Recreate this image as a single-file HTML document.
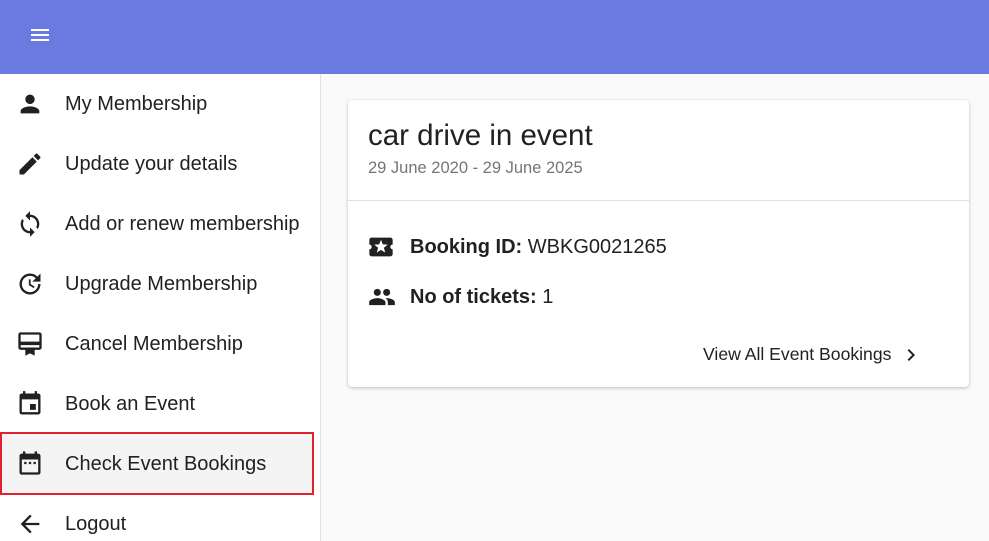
<!DOCTYPE html>
<html><head><style>
*{margin:0;padding:0;box-sizing:border-box}
html,body{width:989px;height:541px;overflow:hidden}
body{background:#fafafa;font-family:"Liberation Sans",Arial,sans-serif;position:relative;color:#212121}
.hdr{position:absolute;left:0;top:0;width:989px;height:74px;background:#6b7ae0}
.side{position:absolute;left:0;top:74px;width:321px;height:467px;background:#fff;border-right:1px solid #e0e0e0}
.item{position:absolute;left:0;width:320px;height:60px}
.item svg{position:absolute;left:16px;top:16px;width:28px;height:28px;fill:#212121}
.item span{position:absolute;left:65px;top:19px;font-size:20px;color:#212121}
.sel{background:#f4f4f4;border:2px solid #e3202f;width:314px}
.card{position:absolute;left:348px;top:100px;width:621px;height:287px;background:#fff;border-radius:4px;box-shadow:0 1px 3px rgba(0,0,0,.25)}
</style></head><body>
<div class="hdr"><svg style="position:absolute;left:28px;top:23px" width="24" height="24" viewBox="0 0 24 24"><path fill="#fff" d="M3 18h18v-2H3v2zm0-5h18v-2H3v2zm0-7v2h18V6H3z"/></svg></div>
<div class="side">
<div class="item" style="top:0"><svg viewBox="0 0 24 24"><path d="M12 12c2.21 0 4-1.79 4-4s-1.79-4-4-4-4 1.79-4 4 1.79 4 4 4zm0 2c-2.67 0-8 1.34-8 4v2h16v-2c0-2.66-5.33-4-8-4z"/></svg><span>My Membership</span></div>
<div class="item" style="top:60px"><svg viewBox="0 0 24 24"><path d="M3 17.25V21h3.75L17.81 9.94l-3.75-3.75L3 17.25zM20.71 7.04a1 1 0 000-1.41l-2.34-2.34a1 1 0 00-1.41 0l-1.83 1.83 3.75 3.75 1.83-1.83z"/></svg><span>Update your details</span></div>
<div class="item" style="top:120px"><svg viewBox="0 0 24 24"><path d="M12 4V1L8 5l4 4V6c3.31 0 6 2.69 6 6 0 1.01-.25 1.97-.7 2.8l1.46 1.46A7.93 7.93 0 0020 12c0-4.42-3.58-8-8-8zm0 14c-3.31 0-6-2.69-6-6 0-1.01.25-1.97.7-2.8L5.24 7.74A7.93 7.93 0 004 12c0 4.42 3.58 8 8 8v3l4-4-4-4v3z"/></svg><span>Add or renew membership</span></div>
<div class="item" style="top:180px"><svg viewBox="0 0 24 24"><path d="M11 8v5l4.25 2.52.77-1.28-3.52-2.09V8H11zm10 2V3l-2.64 2.64A8.96 8.96 0 0012 3a9 9 0 109 9h-2a7 7 0 11-2.05-4.95L14 10h7z"/></svg><span>Upgrade Membership</span></div>
<div class="item" style="top:240px"><svg viewBox="0 0 24 24"><path d="M20 2H4c-1.11 0-2 .89-2 2v11c0 1.11.89 2 2 2h4v5l4-2 4 2v-5h4c1.11 0 2-.89 2-2V4c0-1.11-.89-2-2-2zm0 13H4v-2h16v2zm0-5H4V4h16v6z"/></svg><span>Cancel Membership</span></div>
<div class="item" style="top:300px"><svg viewBox="0 0 24 24"><path d="M17 12h-5v5h5v-5zM16 1v2H8V1H6v2H5c-1.11 0-2 .9-2 2v14c0 1.1.89 2 2 2h14c1.1 0 2-.9 2-2V5c0-1.1-.9-2-2-2h-1V1h-2zm3 18H5V8h14v11z"/></svg><span>Book an Event</span></div>
<div class="item sel" style="top:358px;height:63px"><svg viewBox="0 0 24 24" style="left:14px;top:15px"><path d="M19 4h-1V2h-2v2H8V2H6v2H5c-1.1 0-2 .9-2 2v14c0 1.1.9 2 2 2h14c1.1 0 2-.9 2-2V6c0-1.1-.9-2-2-2zm0 16H5V9h14v11zM7 11h2v2H7zm4 0h2v2h-2zm4 0h2v2h-2z"/></svg><span style="left:63px;top:19px">Check Event Bookings</span></div>
<div class="item" style="top:420px"><svg viewBox="0 0 24 24"><path d="M20 11H7.83l5.59-5.59L12 4l-8 8 8 8 1.41-1.41L7.83 13H20v-2z"/></svg><span>Logout</span></div>
</div>
<div class="card">
<div style="position:absolute;left:20px;top:19px;font-size:29.5px;color:#212121">car drive in event</div>
<div style="position:absolute;left:20px;top:59px;font-size:16.5px;color:#757575">29 June 2020 - 29 June 2025</div>
<div style="position:absolute;left:0;top:100px;width:621px;height:1px;background:#e0e0e0"></div>
<svg style="position:absolute;left:19px;top:133px" width="28" height="28" viewBox="0 0 24 24"><path fill="#212121" d="M20 12c0-1.1.9-2 2-2V6c0-1.1-.9-2-2-2H4c-1.1 0-1.99.9-1.99 2v4c1.1 0 1.99.9 1.99 2s-.89 2-2 2v4c0 1.1.9 2 2 2h16c1.1 0 2-.9 2-2v-4c-1.1 0-2-.9-2-2zm-4.42 4.8L12 14.5l-3.58 2.3 1.08-4.12-3.29-2.69 4.24-.25L12 5.8l1.54 3.95 4.24.25-3.29 2.69 1.09 4.11z"/></svg>
<div style="position:absolute;left:62px;top:136px;font-size:20px"><b>Booking ID:</b> WBKG0021265</div>
<svg style="position:absolute;left:20px;top:183px" width="28" height="28" viewBox="0 0 24 24"><path fill="#212121" d="M16 11c1.66 0 2.99-1.34 2.99-3S17.66 5 16 5c-1.66 0-3 1.34-3 3s1.34 3 3 3zm-8 0c1.66 0 2.99-1.34 2.99-3S9.66 5 8 5C6.34 5 5 6.34 5 8s1.34 3 3 3zm0 2c-2.33 0-7 1.17-7 3.5V19h14v-2.5c0-2.33-4.67-3.5-7-3.5zm8 0c-.29 0-.62.02-.97.05 1.16.84 1.97 1.97 1.97 3.45V19h6v-2.5c0-2.33-4.67-3.5-7-3.5z"/></svg>
<div style="position:absolute;left:62px;top:186px;font-size:20px"><b>No of tickets:</b> 1</div>
<div style="position:absolute;left:355px;top:244px;font-size:17.6px;color:#212121">View All Event Bookings</div>
<svg style="position:absolute;left:551px;top:243px" width="24" height="24" viewBox="0 0 24 24"><path fill="#212121" d="M10 6L8.59 7.41 13.17 12l-4.58 4.59L10 18l6-6z"/></svg>
</div>
</body></html>
